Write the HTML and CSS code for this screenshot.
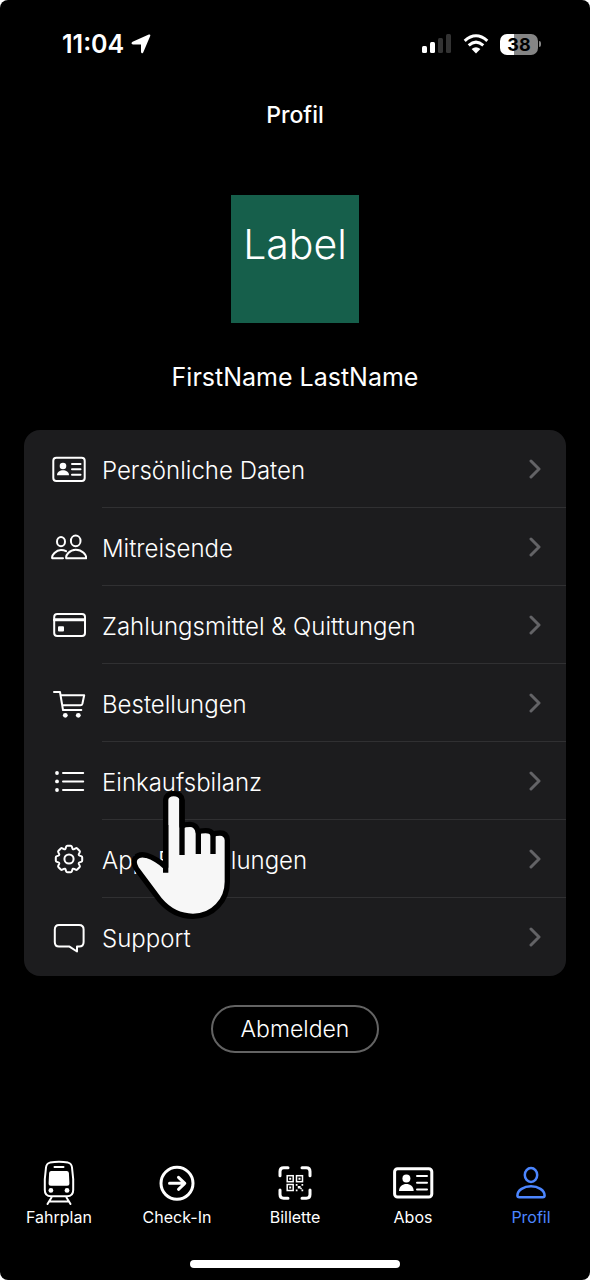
FILE: index.html
```html
<!DOCTYPE html>
<html lang="de">
<head>
<meta charset="utf-8">
<meta name="viewport" content="width=device-width, initial-scale=1">
<title>Profil</title>
<link rel="stylesheet" href="styles.css">
</head>
<body>
<div class="app">
  <div class="status">
    <div class="status-left">
      <span class="time">11:04</span>
      <svg class="locate" viewBox="0 0 20 20" aria-hidden="true"><path d="M1.600 7.800 17.800.6q2-.6 1.400 1.400L12.200 18.400q-1.500 2-2.200-.4V10.500H2Q-.8 9.600 1.600 7.800Z"/></svg>
    </div>
    <div class="status-right">
      <svg class="signal" viewBox="0 0 30 20" aria-hidden="true"><rect x="0" y="12" width="5" height="7" rx="1.500"/><rect x="8" y="8" width="5" height="11" rx="1.500"/><rect class="dim" x="16" y="4" width="5" height="15" rx="1.500"/><rect class="dim" x="24" y="0" width="5" height="19" rx="1.500"/></svg>
      <svg class="wifi" viewBox="0 0 26 20" aria-hidden="true"><path class="arc" d="M1.700 6.800Q13-3.300 24.300 6.800M5.700 11.300Q13 5 20.300 11.300"/><path d="M8.600 15Q13 11.400 17.400 15L13 19.400Z"/></svg>
      <div class="battery"><span class="battery-body">38</span><i class="battery-cap"></i></div>
    </div>
  </div>

  <h1 class="title">Profil</h1>

  <main class="content">
    <div class="avatar">Label</div>
    <p class="name">FirstName LastName</p>

    <nav class="card" aria-label="Profil">
      <a class="row" href="#daten">
        <svg class="icon" viewBox="0 0 36 36" aria-hidden="true"><rect x="2.300" y="6.700" width="31.400" height="23.400" rx="3"/><path d="M21 13h8.500M21 18.300h8.500M21 23.700h8.500"/><g class="fill"><circle cx="12" cy="15" r="3.300"/><path d="M6 24.300c0-3.200 3-5 6-5s6 1.800 6 5Z"/></g></svg>
        <span class="row-text">Persönliche Daten</span>
        <svg class="chevron" viewBox="0 0 12 20" aria-hidden="true"><path d="M2 2l8 8-8 8"/></svg>
      </a>
      <a class="row" href="#mitreisende">
        <svg class="icon" viewBox="0 0 36 36" aria-hidden="true"><ellipse cx="10" cy="12.700" rx="4" ry="4.600"/><ellipse cx="24.700" cy="11.900" rx="4.800" ry="5.300"/><path d="M15.300 29.300c-1-2.600 3-8.600 9.500-8.600s10.800 5.400 10.300 8.600ZM12 29.300H1.200c-.9-3.300 4-8.300 8.800-8.300 2 0 3.600.4 5 1.200"/></svg>
        <span class="row-text">Mitreisende</span>
        <svg class="chevron" viewBox="0 0 12 20" aria-hidden="true"><path d="M2 2l8 8-8 8"/></svg>
      </a>
      <a class="row" href="#zahlung">
        <svg class="icon" viewBox="0 0 36 36" aria-hidden="true"><rect x="3.200" y="6.900" width="30.800" height="22" rx="3"/><path class="thick" d="M3.500 12.700h30"/><rect class="fill" x="7" y="19.300" width="6" height="5.200" rx="1"/></svg>
        <span class="row-text">Zahlungsmittel &amp; Quittungen</span>
        <svg class="chevron" viewBox="0 0 12 20" aria-hidden="true"><path d="M2 2l8 8-8 8"/></svg>
      </a>
      <a class="row" href="#bestellungen">
        <svg class="icon" viewBox="0 0 36 36" aria-hidden="true"><path d="M3 7h6l3 18h18.300M9.600 10.200h23.600l-1.800 8.600q-.4 1.500-2 1.500H11.200"/><g class="fill"><circle cx="14.300" cy="30.300" r="2.400"/><circle cx="27.300" cy="30.300" r="2.400"/></g></svg>
        <span class="row-text">Bestellungen</span>
        <svg class="chevron" viewBox="0 0 12 20" aria-hidden="true"><path d="M2 2l8 8-8 8"/></svg>
      </a>
      <a class="row" href="#einkauf">
        <svg class="icon" viewBox="0 0 36 36" aria-hidden="true"><path d="M12 10h20.200M12 18.400h20.200M12 27h20.200"/><g class="fill"><circle cx="6" cy="10" r="1.900"/><circle cx="6" cy="18.400" r="1.900"/><circle cx="6" cy="27" r="1.900"/></g></svg>
        <span class="row-text">Einkaufsbilanz</span>
        <svg class="chevron" viewBox="0 0 12 20" aria-hidden="true"><path d="M2 2l8 8-8 8"/></svg>
        <svg class="pointer" viewBox="330 135 306 390" aria-hidden="true"><path d="M437 164Q440 146 461 146Q483 146 486 164V243Q494 238 510 238Q530 238 535 262Q540 257 557 257Q574 257 579 268Q586 264 600 264Q620 264 622 285V410C622 465 580 514 519 514C481 514 449 500 420 466L349 371C332 342 352 324 379 331Q410 341 437 366Z"/><path class="fold" d="M437 240V383M486 164V330M535 258V327M579 266V327"/></svg>
      </a>
      <a class="row" href="#einstellungen">
        <svg class="icon" viewBox="-18 -18 36 36" aria-hidden="true"><path d="M13.200-1.600V1.600Q13.200 2.600 12.200 2.900L10.600 3.400Q9.300 3.850 9.900 5.100L10.700 6.600Q11.200 7.500 10.500 8.200L8.200 10.500Q7.500 11.200 6.600 10.700L5.100 9.900Q3.850 9.300 3.400 10.600L2.900 12.200Q2.600 13.200 1.600 13.200H-1.600Q-2.600 13.200-2.900 12.200L-3.400 10.600Q-3.850 9.300-5.100 9.900L-6.600 10.700Q-7.500 11.200-8.200 10.500L-10.500 8.200Q-11.200 7.500-10.700 6.600L-9.900 5.100Q-9.300 3.850-10.600 3.400L-12.200 2.900Q-13.200 2.600-13.200 1.600V-1.600Q-13.200-2.600-12.200-2.900L-10.600-3.400Q-9.300-3.850-9.900-5.100L-10.700-6.600Q-11.200-7.500-10.500-8.200L-8.200-10.500Q-7.500-11.200-6.600-10.700L-5.100-9.900Q-3.850-9.300-3.400-10.600L-2.900-12.200Q-2.600-13.200-1.600-13.200H1.600Q2.600-13.200 2.900-12.200L3.400-10.600Q3.850-9.300 5.100-9.900L6.600-10.700Q7.500-11.200 8.200-10.500L10.500-8.200Q11.200-7.500 10.700-6.600L9.900-5.100Q9.300-3.850 10.600-3.400L12.200-2.900Q13.200-2.600 13.200-1.600Z"/><circle r="4.600"/></svg>
        <span class="row-text">App-Einstellungen</span>
        <svg class="chevron" viewBox="0 0 12 20" aria-hidden="true"><path d="M2 2l8 8-8 8"/></svg>
      </a>
      <a class="row" href="#support">
        <svg class="icon" viewBox="0 0 36 36" aria-hidden="true"><path d="M8 6h20.100q4.500 0 4.500 4.500v12.600q0 4.500-4.500 4.500H26V32.500L18.500 27.600H8q-4.200 0-4.200-4.500V10.500Q3.800 6 8 6Z"/></svg>
        <span class="row-text">Support</span>
        <svg class="chevron" viewBox="0 0 12 20" aria-hidden="true"><path d="M2 2l8 8-8 8"/></svg>
      </a>
    </nav>

    <button class="logout" type="button">Abmelden</button>
  </main>

  <nav class="tabs" aria-label="Navigation">
    <a class="tab" href="#fahrplan">
      <svg class="tab-icon" viewBox="0 0 48 48" aria-hidden="true"><path class="mid" d="M15 3.600Q24 1.800 33 3.600Q36.600 4.500 37 8.500L38.200 20V31Q38.200 37.300 32 37.300H16Q9.800 37.300 9.800 31V20L11 8.500Q11.400 4.500 15 3.600Z"/><path class="mid" d="M19.500 8h9M16.500 38.500l-4 6.500M31.500 38.500l4 6.500M14.500 42.600h19"/><path class="fill" d="M16.300 12h15.400q2 0 2.200 2l.5 10.200q.1 2.500-2.300 2.500H15.900q-2.400 0-2.300-2.500l.5-10.200q.2-2 2.200-2Z"/><g class="fill"><circle cx="15.900" cy="31.400" r="2.400"/><circle cx="32" cy="31.400" r="2.400"/></g></svg>
      <span>Fahrplan</span>
    </a>
    <a class="tab" href="#checkin">
      <svg class="tab-icon" viewBox="0 0 48 48" aria-hidden="true"><circle cx="24" cy="24.300" r="16"/><path d="M16.500 24.300h15.300M25.500 18.300l6.300 6-6.300 6"/></svg>
      <span>Check-In</span>
    </a>
    <a class="tab" href="#billette">
      <svg class="tab-icon" viewBox="0 0 48 48" aria-hidden="true"><path d="M9 16.800V12.500q0-3.700 3.700-3.700h4.300M31 8.800h4.300q3.700 0 3.700 3.700v4.300M39 31v4.500q0 3.700-3.700 3.700H31M17 39.200h-4.300q-3.700 0-3.700-3.700V31"/><g class="thin"><rect x="16.200" y="16.700" width="6" height="6"/><rect x="25.500" y="16.700" width="6" height="6"/><rect x="16.200" y="25.500" width="6" height="6"/></g><path class="fill" d="M18.200 18.700h2v2h-2zM27.500 18.700h2v2h-2zM18.200 27.500h2v2h-2zM24.800 25h1.700v1.700h-1.700zM30.500 25h1.700v1.700h-1.700zM26.800 27h2.800v2.500h-2.800zM24.800 30.500h1.700v1.700h-1.700zM30.500 30.500h1.700v1.700h-1.700zM29.300 28.800h1.500v1.500h-1.500z"/></svg>
      <span>Billette</span>
    </a>
    <a class="tab" href="#abos">
      <svg class="tab-icon" viewBox="0 0 48 48" aria-hidden="true"><rect x="5.600" y="9.700" width="37.200" height="28.400" rx="3"/><path class="mid" d="M28 17h10M28 23.700h10M28 30.400h10"/><g class="fill"><circle cx="17.400" cy="19.600" r="4"/><path d="M10 31.900c0-4.500 3.700-7 7.400-7s7.300 2.500 7.300 7Z"/></g></svg>
      <span>Abos</span>
    </a>
    <a class="tab tab-active" href="#profil" aria-current="page">
      <svg class="tab-icon" viewBox="0 0 48 48" aria-hidden="true"><ellipse class="bold" cx="24" cy="16" rx="6.200" ry="6.900"/><path class="bold" d="M10.400 36.500C10.400 31 17 27.300 24 27.300S37.600 31 37.600 36.500Q37.600 38.200 35.700 38.200H12.300Q10.400 38.200 10.400 36.500Z"/></svg>
      <span>Profil</span>
    </a>
  </nav>
  <div class="home"></div>
</div>
</body>
</html>
```

FILE: styles.css
```css
* {
  box-sizing: border-box;
}

body {
  margin: 0;
  background: #fff;
  color: #fff;
  font-family: Inter, "Liberation Sans", sans-serif;
}

.app {
  display: flex;
  flex-direction: column;
  min-height: 100vh;
  background: #000;
  border-radius: 8px;
}

.status {
  display: flex;
  align-items: center;
  justify-content: space-between;
  padding: 28px 49px 0 62px;
  height: 60px;
}

.status-left,
.status-right {
  display: flex;
  align-items: center;
}

.status-left {
  gap: 7px;
}

.status-right {
  gap: 11px;
}

.time {
  font-size: 25px;
  font-weight: 600;
  line-height: 32px;
}

.locate {
  width: 20px;
  height: 20px;
  fill: #fff;
}

.signal {
  width: 30px;
  height: 20px;
  fill: #fff;
}

.dim {
  fill: #333;
}

.wifi {
  width: 26px;
  height: 20px;
  fill: #fff;
}

.arc {
  fill: none;
  stroke: #fff;
  stroke-width: 3;
}

.battery {
  display: flex;
  align-items: center;
  gap: 1px;
}

.battery-body {
  width: 38px;
  border-radius: 7px;
  background: linear-gradient(to right, #fff 38%, #858585 38%);
  color: #000;
  font-size: 18px;
  font-weight: 700;
  line-height: 21px;
  text-align: center;
}

.battery-cap {
  width: 2px;
  height: 6px;
  border-radius: 0 2px 2px 0;
  background: #858585;
}

.title {
  margin: 39px 0 0;
  font-size: 23px;
  font-weight: 500;
  line-height: 32px;
  text-align: center;
}

.content {
  display: flex;
  flex-direction: column;
  align-items: center;
  flex: 1;
  padding: 64px 24px 0;
}

.avatar {
  width: 128px;
  height: 128px;
  padding-top: 24px;
  background: #165f4b;
  font-size: 41px;
  font-weight: 300;
  line-height: 50px;
  text-align: center;
}

.name {
  margin: 38px 0 37px;
  font-size: 25px;
  line-height: 32px;
}

.card {
  align-self: stretch;
  border-radius: 16px;
  background: #1c1c1e;
}

.row {
  position: relative;
  display: flex;
  align-items: center;
  gap: 15px;
  height: 78px;
  padding-left: 27px;
  color: #fff;
  font-size: 24px;
  font-weight: 300;
  text-decoration: none;
}

.row-text {
  flex: 1;
  height: 78px;
  padding-top: 2px;
  border-bottom: 1px solid #303032;
  line-height: 78px;
}

.row:last-child .row-text {
  border-bottom: 0;
}

.icon {
  width: 36px;
  height: 36px;
  fill: none;
  stroke: #fff;
  stroke-width: 2;
  stroke-linecap: round;
  stroke-linejoin: round;
}

.icon .thick {
  stroke-width: 3;
}

.icon .fill,
.tab-icon .fill {
  fill: currentColor;
  stroke: none;
}

.chevron {
  position: absolute;
  right: 25px;
  width: 12px;
  height: 20px;
  fill: none;
  stroke: #636366;
  stroke-width: 3;
  stroke-linecap: round;
  stroke-linejoin: round;
}

.pointer {
  position: absolute;
  z-index: 1;
  left: 106px;
  top: 48px;
  width: 102px;
  height: 130px;
  fill: #f7f7f7;
  stroke: #000;
  stroke-width: 16;
  stroke-linejoin: round;
}

.pointer .fold {
  fill: none;
}

.logout {
  margin-top: 29px;
  height: 48px;
  padding: 0 28px;
  border: 2px solid #636363;
  border-radius: 24px;
  background: #000;
  color: #fff;
  font: 300 23px Inter, "Liberation Sans", sans-serif;
}

.tabs {
  display: grid;
  grid-template-columns: repeat(5, 1fr);
}

.tab {
  display: flex;
  flex-direction: column;
  align-items: center;
  color: #fff;
  font-size: 16px;
  line-height: 20px;
  text-decoration: none;
}

.tab-active {
  color: #4c86ff;
}

.tab-icon {
  width: 48px;
  height: 48px;
  fill: none;
  stroke: currentColor;
  stroke-width: 3;
  stroke-linecap: round;
  stroke-linejoin: round;
}

.tab-icon .mid {
  stroke-width: 2;
}

.tab-icon .bold {
  stroke-width: 2.5;
}

.tab-icon .thin {
  stroke-width: 1.5;
  stroke-linejoin: miter;
}

.home {
  width: 210px;
  height: 8px;
  margin: 33px auto 12px;
  border-radius: 4px;
  background: #fff;
}
```
